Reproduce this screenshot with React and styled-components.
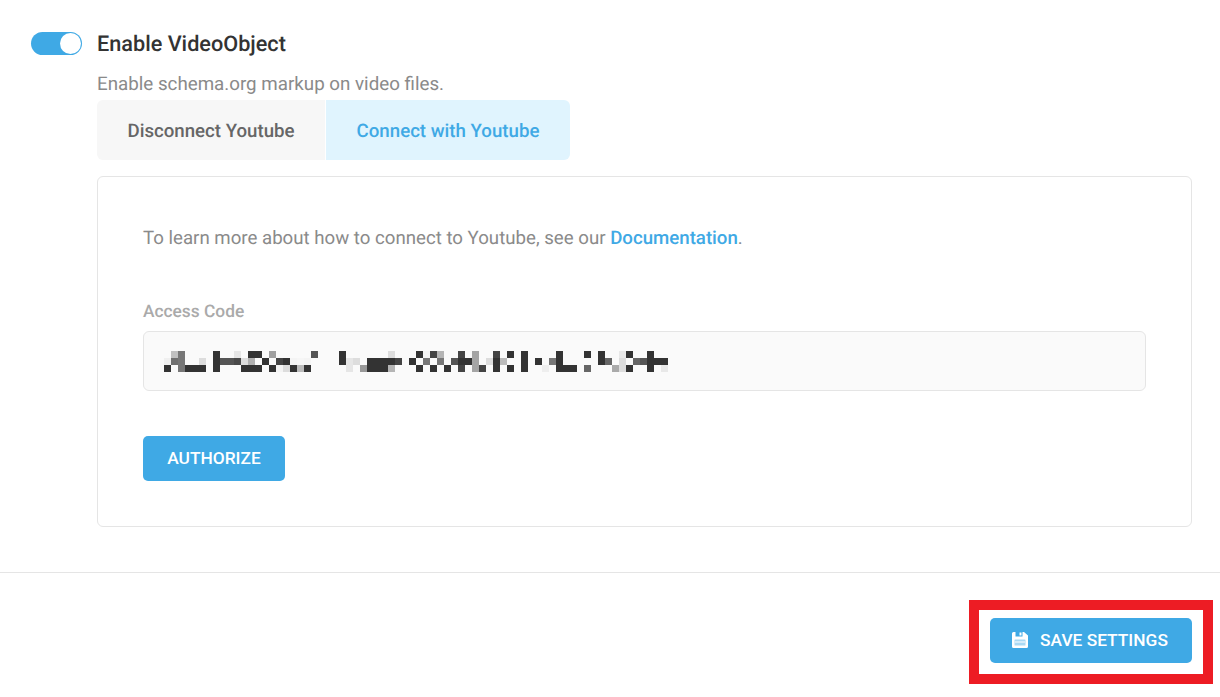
import styled, { createGlobalStyle } from "styled-components";

const BLUE = "#3fa9e5";

const GlobalStyle = createGlobalStyle`
  body {
    margin: 0;
    background: #ffffff;
    font-family: Roboto, "Liberation Sans", sans-serif;
    text-rendering: geometricPrecision;
  }
`;

const Section = styled.section`
  display: flex;
  padding: 32px 28px 45px 31px;
  border-bottom: 1px solid #e5e5e5;
`;

const Toggle = styled.div`
  flex: none;
  display: flex;
  justify-content: flex-end;
  align-items: center;
  box-sizing: border-box;
  width: 51px;
  height: 23px;
  margin-right: 15px;
  padding-right: 1px;
  border-radius: 12px;
  background: ${BLUE};
`;

const Knob = styled.span`
  width: 21px;
  height: 21px;
  border-radius: 50%;
  background: #ffffff;
`;

const Content = styled.div`
  flex: 1;
  min-width: 0;
`;

const Title = styled.h2`
  margin: 0;
  height: 23px;
  font-size: 21.67px;
  line-height: 25px;
  font-weight: 500;
  color: #333333;
`;

const Description = styled.p`
  margin: 17px 0 0;
  height: 28px;
  font-size: 18.75px;
  line-height: 24px;
  font-weight: 400;
  color: #8a8a8a;
`;

const Tabs = styled.div`
  display: flex;
  gap: 1px;
`;

const Tab = styled.div`
  display: flex;
  align-items: center;
  justify-content: center;
  box-sizing: border-box;
  width: ${(p) => (p.$active ? "244px" : "228px")};
  height: 60px;
  padding-top: 1px;
  border-radius: ${(p) => (p.$active ? "0 6px 6px 0" : "6px 0 0 6px")};
  background: ${(p) => (p.$active ? "#e0f4fe" : "#f7f7f7")};
  color: ${(p) => (p.$active ? BLUE : "#666666")};
  font-size: 18.67px;
  font-weight: 500;
`;

const Card = styled.div`
  margin-top: 16px;
  padding: 45px 45px 45px;
  border: 1px solid #e5e5e5;
  border-radius: 6px;
`;

const Intro = styled.p`
  margin: 0;
  font-size: 18.67px;
  line-height: 33px;
  font-weight: 400;
  color: #8a8a8a;
`;

const DocLink = styled.a`
  color: ${BLUE};
  font-weight: 500;
  text-decoration: none;
`;

const FieldLabel = styled.label`
  display: block;
  margin-top: 47px;
  font-size: 17.33px;
  line-height: 20px;
  font-weight: 500;
  color: #aaaaaa;
`;

const CodeField = styled.div`
  display: flex;
  align-items: center;
  box-sizing: border-box;
  height: 60px;
  margin-top: 9px;
  padding: 1px 20px 0;
  border: 1px solid #e5e5e5;
  border-radius: 6px;
  background: #fafafa;
`;

const Button = styled.button`
  display: flex;
  align-items: center;
  justify-content: center;
  height: 45px;
  padding: 0 0 1px;
  border: 0;
  border-radius: 5px;
  background: ${BLUE};
  color: #ffffff;
  font-family: inherit;
  font-size: 17.33px;
  font-weight: 500;
`;

const AuthorizeButton = styled(Button)`
  width: 142px;
  margin-top: 45px;
`;

const Footer = styled.footer`
  display: flex;
  justify-content: flex-end;
  padding: 45px 28px 34px 0;
`;

const SaveWrap = styled.div`
  position: relative;
`;

const SaveButton = styled(Button)`
  width: 202px;
  gap: 12px;
  padding-right: 2px;
`;

const Highlight = styled.div`
  position: absolute;
  inset: -18px -21px -21px -21px;
  border: 10px solid #ed1c24;
  pointer-events: none;
`;

// blurred access code: [row, column, grey], blocks are 7px
const BLOCKS = [
  [0, 1, "#c0c0c0"], [0, 2, "#777"], [0, 7, "#333"], [0, 10, "#e6e6e6"], [0, 12, "#333"], [0, 13, "#333"],
  [0, 15, "#a0a0a0"], [0, 21, "#555"], [0, 25, "#333"], [0, 32, "#ddd"], [0, 36, "#333"], [0, 37, "#f4f4f4"],
  [0, 38, "#444"], [0, 39, "#b5b5b5"], [0, 42, "#444"], [0, 44, "#a5a5a5"], [0, 47, "#444"], [0, 49, "#333"],
  [0, 51, "#333"], [0, 56, "#333"], [0, 60, "#333"], [0, 62, "#333"], [0, 65, "#e8e8e8"], [0, 66, "#333"],
  [0, 69, "#333"],
  [1, 0, "#f0f0f0"], [1, 1, "#707070"], [1, 2, "#777"], [1, 5, "#ddd"], [1, 7, "#333"], [1, 8, "#555"],
  [1, 9, "#555"], [1, 10, "#4a4a4a"], [1, 11, "#ddd"], [1, 12, "#b0b0b0"], [1, 14, "#333"], [1, 16, "#444"],
  [1, 17, "#333"], [1, 18, "#f4f4f4"], [1, 19, "#f6f6f6"], [1, 20, "#f4f4f4"], [1, 25, "#333"], [1, 26, "#e6e6e6"],
  [1, 27, "#ddd"], [1, 29, "#333"], [1, 30, "#333"], [1, 31, "#333"], [1, 32, "#333"], [1, 33, "#444"],
  [1, 35, "#333"], [1, 37, "#777"], [1, 39, "#777"], [1, 41, "#555"], [1, 42, "#333"], [1, 43, "#333"],
  [1, 44, "#a5a5a5"], [1, 46, "#ddd"], [1, 47, "#333"], [1, 48, "#bbb"], [1, 51, "#333"], [1, 53, "#333"],
  [1, 55, "#777"], [1, 56, "#333"], [1, 62, "#333"], [1, 63, "#666"], [1, 65, "#ddd"], [1, 67, "#666"],
  [1, 68, "#555"], [1, 69, "#333"], [1, 70, "#333"], [1, 71, "#333"],
  [2, 0, "#333"], [2, 2, "#777"], [2, 3, "#333"], [2, 4, "#333"], [2, 5, "#333"], [2, 7, "#333"], [2, 11, "#333"],
  [2, 12, "#333"], [2, 13, "#333"], [2, 15, "#333"], [2, 16, "#f4f4f4"], [2, 17, "#ddd"], [2, 18, "#333"],
  [2, 19, "#bbb"], [2, 20, "#333"], [2, 26, "#e6e6e6"], [2, 28, "#999"], [2, 29, "#333"], [2, 30, "#333"],
  [2, 31, "#333"], [2, 32, "#b5b5b5"], [2, 36, "#333"], [2, 38, "#333"], [2, 40, "#333"], [2, 42, "#444"],
  [2, 44, "#a5a5a5"], [2, 45, "#444"], [2, 47, "#333"], [2, 49, "#333"], [2, 51, "#333"], [2, 54, "#eee"],
  [2, 56, "#333"], [2, 57, "#333"], [2, 58, "#333"], [2, 60, "#666"], [2, 64, "#aaa"], [2, 65, "#ddd"],
  [2, 66, "#333"], [2, 69, "#333"], [2, 71, "#e8e8e8"],
];

function BlurredCode() {
  return (
    <svg width="504" height="21" viewBox="0 0 504 21" shapeRendering="crispEdges">
      {BLOCKS.map(([row, col, grey]) => (
        <rect key={`${row}-${col}`} x={col * 7} y={row * 7} width="7" height="7" fill={grey} />
      ))}
    </svg>
  );
}

function SaveIcon() {
  return (
    <svg width="16" height="16" viewBox="0 0 16 16">
      <path
        d="M1.5 0H3.5V4.5H10.5V0H12L16 3.5V14.5A1.5 1.5 0 0 1 14.5 16H1.5A1.5 1.5 0 0 1 0 14.5V1.5A1.5 1.5 0 0 1 1.5 0Z"
        fill="#ffffff"
      />
      <rect x="7.5" y="0.5" width="2" height="3" fill="#ffffff" />
      <rect x="2.5" y="7.5" width="11" height="6" rx="0.5" fill="#a9d9f4" />
      <rect x="3" y="9.5" width="10" height="1" fill="#ffffff" />
    </svg>
  );
}

export default function App() {
  return (
    <>
      <GlobalStyle />
      <Section>
        <Toggle>
          <Knob />
        </Toggle>
        <Content>
          <Title>Enable VideoObject</Title>
          <Description>Enable schema.org markup on video files.</Description>
          <Tabs>
            <Tab>Disconnect Youtube</Tab>
            <Tab $active>Connect with Youtube</Tab>
          </Tabs>
          <Card>
            <Intro>
              To learn more about how to connect to Youtube, see our <DocLink href="#">Documentation</DocLink>.
            </Intro>
            <FieldLabel>Access Code</FieldLabel>
            <CodeField>
              <BlurredCode />
            </CodeField>
            <AuthorizeButton>AUTHORIZE</AuthorizeButton>
          </Card>
        </Content>
      </Section>
      <Footer>
        <SaveWrap>
          <SaveButton>
            <SaveIcon />
            SAVE SETTINGS
          </SaveButton>
          <Highlight />
        </SaveWrap>
      </Footer>
    </>
  );
}
